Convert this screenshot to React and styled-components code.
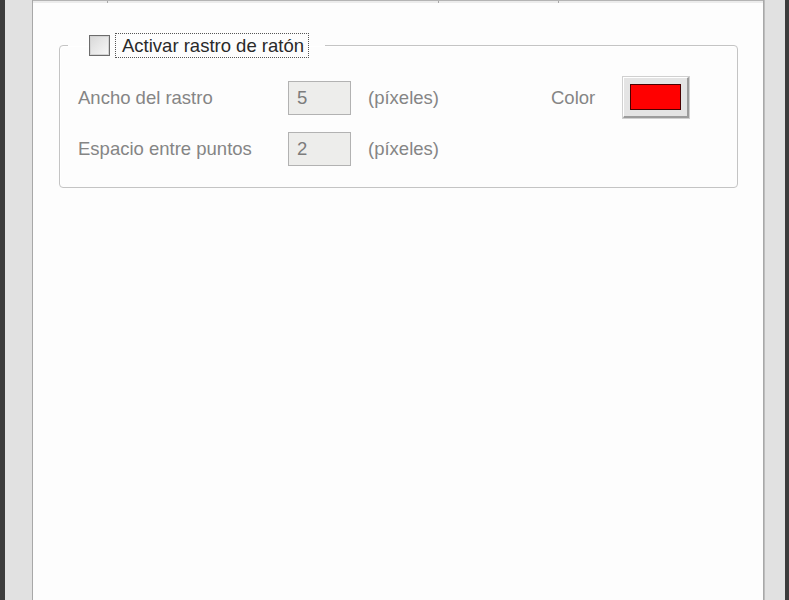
import React from "react";
import styled, { createGlobalStyle } from "styled-components";

const Global = createGlobalStyle`
  html, body {
    margin: 0;
    padding: 0;
    background: #e0e0e0;
    overflow: hidden;
  }
  body {
    font-family: "Liberation Sans", Arial, sans-serif;
  }
`;

const App = () => {
  return (
    <Window>
      <Global />
      <LeftFrame />
      <Panel>
        <TabEdges>
          <TabEdge $w={74} />
          <TabEdge $w={330} />
          <TabEdge $w={119} />
          <TabEdge $w={0} $grow />
        </TabEdges>
        <Body>
          <Group>
            <Legend>
              <CheckBox />
              <FocusLabel>Activar rastro de ratón</FocusLabel>
            </Legend>
            <Row $h={41}>
              <Label>Ancho del rastro</Label>
              <NumberBox>5</NumberBox>
              <Unit>(píxeles)</Unit>
              <ColorLabel>Color</ColorLabel>
              <ColorButton>
                <Swatch $color="#ff0000" />
              </ColorButton>
            </Row>
            <Row $h={34}>
              <Label>Espacio entre puntos</Label>
              <NumberBox>2</NumberBox>
              <Unit>(píxeles)</Unit>
            </Row>
          </Group>
        </Body>
      </Panel>
      <RightFrame />
    </Window>
  );
};

export default App;

const Window = styled.div`
  display: flex;
  height: 600px;
  width: 789px;
  background: #e0e0e0;
`;

const LeftFrame = styled.div`
  width: 27px;
  border-left: 5px solid #3c3c3c;
  border-right: 1px solid #a8a8a8;
  background: #e1e1e1;
`;

const RightFrame = styled.div`
  width: 20px;
  border-left: 1px solid #bdbdbd;
  border-right: 4px solid #3c3c3c;
  background: #e1e1e1;
`;

const Panel = styled.div`
  flex: 1;
  display: flex;
  flex-direction: column;
  background: #fdfdfd;
  border-right: 1px solid #a8a8a8;
`;

const TabEdges = styled.div`
  display: flex;
  height: 2px;
  border-top: 1px solid #b4b4b4;
  background: #ececec;
`;

const TabEdge = styled.div`
  width: ${(p) => p.$w}px;
  flex: ${(p) => (p.$grow ? 1 : "none")};
  border-right: ${(p) => (p.$grow ? "none" : "1px solid #a8a8a8")};
`;

const Body = styled.div`
  padding: 30px 25px 0 26px;
`;

const Group = styled.fieldset`
  margin: 0;
  padding: 0 18px 21px 18px;
  border: 1px solid #c4c4c4;
  border-radius: 4px;
  box-shadow: 1px 1px 0 #ffffff inset;
  display: flex;
  flex-direction: column;
  gap: 14px;
`;

const Legend = styled.legend`
  display: flex;
  align-items: center;
  gap: 5px;
  margin-left: -10px;
  padding: 0 16px 0 21px;
  height: 25px;
  margin-bottom: 19px;
`;

const CheckBox = styled.span`
  width: 19px;
  height: 19px;
  border: 1px solid #6c6c6c;
  box-shadow: inset 0 0 0 1px #d4d4d4;
  background: linear-gradient(135deg, #d8d8d8, #f8f8f8);
`;

const FocusLabel = styled.span`
  font-size: 18.5px;
  color: #2a2a2a;
  line-height: 21px;
  padding: 1px 4px 1px 6px;
  border: 1px dotted #555555;
`;

const Row = styled.div`
  display: flex;
  align-items: center;
  height: ${(p) => p.$h}px;
`;

const Label = styled.span`
  width: 210px;
  font-size: 18.5px;
  color: #858585;
`;

const NumberBox = styled.div`
  box-sizing: border-box;
  width: 63px;
  height: 34px;
  padding-left: 8px;
  display: flex;
  align-items: center;
  font-size: 18.5px;
  color: #7c7c7c;
  background: #ededeb;
  border: 1px solid #b2b2b2;
`;

const Unit = styled.span`
  width: 183px;
  margin-left: 17px;
  font-size: 18.5px;
  color: #858585;
`;

const ColorLabel = styled.span`
  width: 72px;
  font-size: 18.5px;
  color: #858585;
`;

const ColorButton = styled.div`
  box-sizing: border-box;
  width: 66px;
  height: 41px;
  display: flex;
  align-items: center;
  justify-content: center;
  background: #e4e4e4;
  border-top: 1px solid #ffffff;
  border-left: 1px solid #ffffff;
  border-right: 2px solid #9c9c9c;
  border-bottom: 2px solid #9c9c9c;
  box-shadow: 0 0 0 1px #d0d0d0;
`;

const Swatch = styled.div`
  box-sizing: border-box;
  width: 51px;
  height: 26px;
  background: ${(p) => p.$color};
  border: 1px solid #4a0000;
`;
